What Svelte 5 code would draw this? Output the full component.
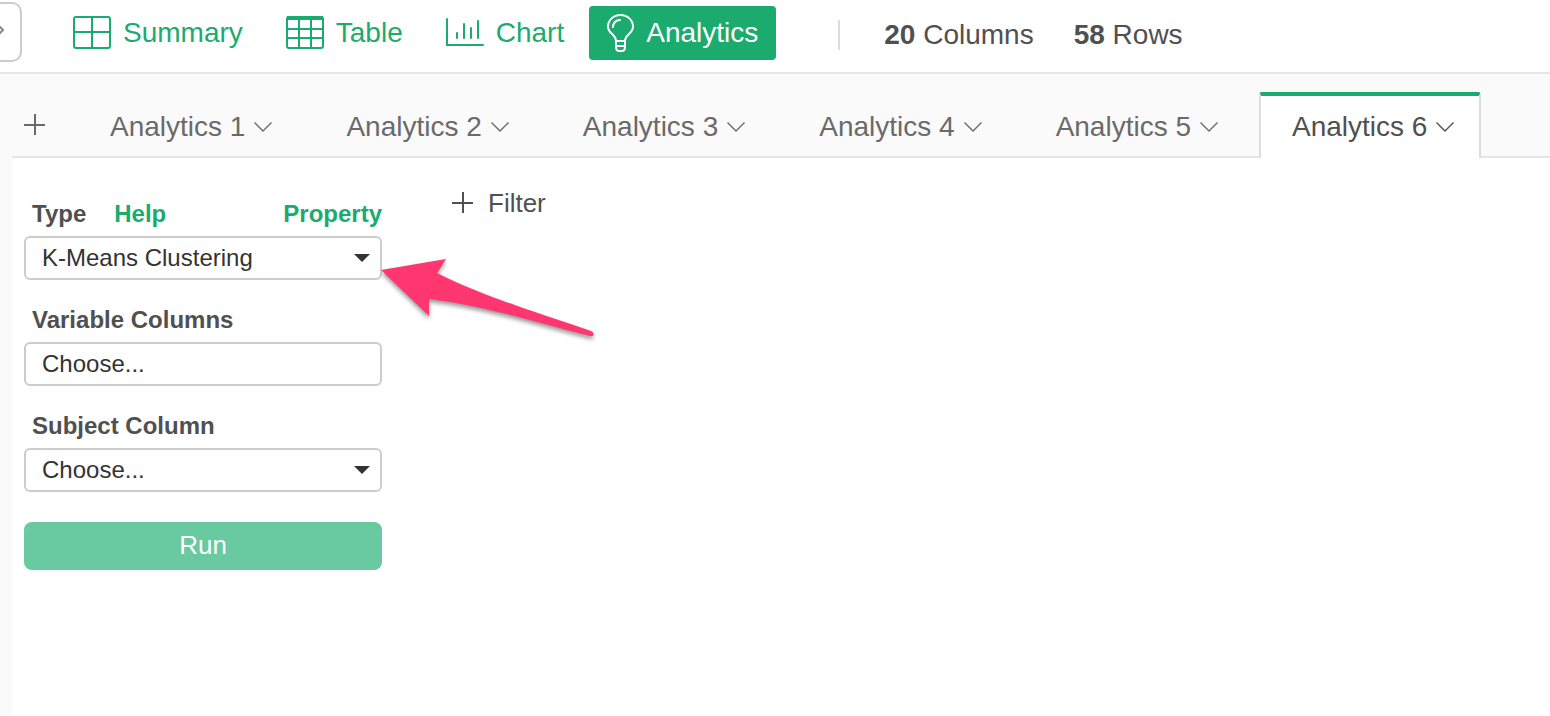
<script lang="ts">
	type View = 'Summary' | 'Table' | 'Chart' | 'Analytics';

	const views: View[] = ['Summary', 'Table', 'Chart', 'Analytics'];
	const tabs = [1, 2, 3, 4, 5, 6].map((n) => `Analytics ${n}`);

	let activeView = $state<View>('Analytics');
	let activeTab = $state('Analytics 6');
	let type = $state('K-Means Clustering');
	let variables = $state('');
	let subject = $state('');
</script>

{#snippet caret()}
	<svg class="caret" width="16" height="8" viewBox="0 0 16 8" aria-hidden="true">
		<path d="M0 0h16L8 8z" fill="#333" />
	</svg>
{/snippet}

{#snippet plus()}
	<svg width="22" height="22" viewBox="0 0 22 22" stroke="currentColor" stroke-width="2" aria-hidden="true">
		<path d="M11 0v21M0 11h21" />
	</svg>
{/snippet}

<div class="page">
	<header>
		<button type="button" class="expand" aria-label="Expand sidebar">
			<svg width="8" height="14" viewBox="0 0 8 14" fill="none" stroke="#888" stroke-width="2" aria-hidden="true">
				<path d="M1 1l6 6-6 6" />
			</svg>
		</button>

		<nav aria-label="Views">
			{#each views as view (view)}
				<button
					type="button"
					class="view"
					class:active={activeView === view}
					aria-pressed={activeView === view}
					onclick={() => (activeView = view)}
				>
					{#if view === 'Summary'}
						<svg width="38" height="34" viewBox="0 0 38 34" fill="none" stroke="currentColor" stroke-width="2" aria-hidden="true">
							<rect x="1" y="1" width="36" height="31" rx="2" />
							<path d="M19 1v31M1 16h36" />
						</svg>
					{:else if view === 'Table'}
						<svg width="38" height="34" viewBox="0 0 38 34" fill="none" stroke="currentColor" stroke-width="2" aria-hidden="true">
							<rect x="1" y="1" width="36" height="31" rx="2" />
							<path d="M13 4v28M25 4v28M1 13h36M1 22h36" />
							<path d="M1 2h36" stroke-width="4" stroke-linejoin="round" />
						</svg>
					{:else if view === 'Chart'}
						<svg width="38" height="34" viewBox="0 0 38 34" fill="none" stroke="currentColor" stroke-width="2" stroke-linecap="round" aria-hidden="true">
							<path d="M1 3v26h36M11 17v5M18 8v14M25 12v10M32 5v17" />
						</svg>
					{:else}
						<svg width="27" height="38" viewBox="0 0 27 38" fill="none" stroke="currentColor" stroke-width="2" stroke-linecap="round" stroke-linejoin="round" aria-hidden="true">
							<path d="M9 27C9 20 1 20 1 12.500a12.500 11.500 0 0 1 25 0C26 20 18 20 18 27z" />
							<path d="M6 13c0-4 3-7 7-7M9 27v6q0 4 3 4h3q3 0 3-4v-6M9 32h9" />
						</svg>
					{/if}
					{view}
				</button>
			{/each}
		</nav>

		<div class="counts">
			<span><b>20</b> Columns</span>
			<span><b>58</b> Rows</span>
		</div>
	</header>

	<div class="tab-bar">
		<button type="button" class="add" aria-label="Add analytics">{@render plus()}</button>
		<div class="tabs" role="tablist">
			{#each tabs as tab (tab)}
				<button
					type="button"
					role="tab"
					class="tab"
					aria-selected={activeTab === tab}
					onclick={() => (activeTab = tab)}
				>
					{tab}
					<svg width="18" height="10" viewBox="0 0 18 10" fill="none" stroke="currentColor" stroke-width="1.400" aria-hidden="true">
						<path d="M0.500 0.500L9 9l8.500-8.500" />
					</svg>
				</button>
			{/each}
		</div>
	</div>

	<main>
		<form onsubmit={(event) => event.preventDefault()}>
			<div class="field">
				<div class="label-row">
					<label for="type">Type</label>
					<a href="#help">Help</a>
					<button type="button" class="property">Property</button>
				</div>
				<div class="control">
					<select id="type" bind:value={type}>
						<option>K-Means Clustering</option>
					</select>
					{@render caret()}
					<svg class="pointer" width="224" height="96" viewBox="0 0 224 96" aria-hidden="true">
						<path
							d="M1 19L66 8L57 22C98 43 160 63 211 80C215 82 214 86 210 85C160 72 100 54 49 48V65Z"
							fill="#ff366f"
						/>
					</svg>
				</div>
			</div>

			<div class="field">
				<div class="label-row"><label for="variables">Variable Columns</label></div>
				<input id="variables" type="text" placeholder="Choose..." bind:value={variables} />
			</div>

			<div class="field">
				<div class="label-row"><label for="subject">Subject Column</label></div>
				<div class="control">
					<select id="subject" bind:value={subject}>
						<option value="">Choose...</option>
					</select>
					{@render caret()}
				</div>
			</div>

			<button type="submit" class="run">Run</button>
		</form>

		<button type="button" class="filter">{@render plus()} Filter</button>
	</main>
</div>

<style>
	:global(body) {
		margin: 0;
	}

	.page {
		--green: #1bab6e;
		display: flex;
		flex-direction: column;
		min-height: 100vh;
		background: #fafafa;
		color: #505050;
		font-family: 'Liberation Sans', Arial, sans-serif;
		font-size: 28px;
	}

	.page * {
		box-sizing: border-box;
	}

	svg {
		flex: none;
	}

	button {
		padding: 0;
		border: 0;
		background: none;
		color: inherit;
		font: inherit;
		cursor: pointer;
	}

	header {
		display: flex;
		align-items: flex-start;
		border-bottom: 2px solid #e6e6e6;
		padding: 2px 0 10px;
		background: #fff;
		white-space: nowrap;
	}

	.expand {
		display: flex;
		align-items: center;
		justify-content: center;
		width: 48px;
		height: 60px;
		margin-left: -26px;
		border: 2px solid #ccc;
		border-radius: 10px;
		padding: 0 0 4px 4px;
		background: #fff;
	}

	nav {
		display: flex;
		gap: 7px;
		margin: 4px 0 0 33px;
	}

	.view {
		display: flex;
		align-items: center;
		gap: 12px;
		height: 54px;
		padding: 0 18px;
		border-radius: 4px;
		color: var(--green);
	}

	.view.active {
		background: var(--green);
		color: #fff;
	}

	.counts {
		display: flex;
		gap: 40px;
		margin: 18px 0 0 62px;
		border-left: 2px solid #ddd;
		padding-left: 44px;
		line-height: 30px;
	}

	.tab-bar {
		display: flex;
		align-items: flex-end;
		gap: 31px;
		margin-left: 12px;
		padding: 18px 0 0 12px;
		box-shadow: inset 0 -2px #e6e6e6;
		color: #6a6a6a;
		white-space: nowrap;
	}

	.add {
		display: flex;
		align-items: center;
		height: 66px;
	}

	.tabs {
		display: flex;
		gap: 14px;
	}

	.tab {
		display: flex;
		align-items: center;
		gap: 9px;
		height: 66px;
		border: solid transparent;
		border-width: 4px 2px 0;
		padding: 0 25px 0 31px;
	}

	.tab[aria-selected='true'] {
		border-color: var(--green) #ddd transparent;
		border-radius: 3px 3px 0 0;
		background: #fff;
		color: #505050;
	}

	main {
		display: flex;
		flex: 1;
		align-items: flex-start;
		gap: 70px;
		margin-left: 12px;
		padding: 30px 12px;
		background: #fff;
	}

	form {
		display: flex;
		flex-direction: column;
		gap: 26px;
		width: 358px;
		padding-top: 12px;
		font-size: 24px;
	}

	.field {
		display: flex;
		flex-direction: column;
		gap: 8px;
	}

	.label-row {
		display: flex;
		gap: 28px;
		padding-left: 8px;
		font-weight: 700;
		line-height: 28px;
	}

	a,
	.property {
		color: var(--green);
		text-decoration: none;
	}

	.property {
		margin-left: auto;
	}

	.control {
		position: relative;
	}

	select,
	input {
		display: block;
		width: 100%;
		height: 44px;
		border: 2px solid #ccc;
		border-radius: 6px;
		padding: 0 16px;
		appearance: none;
		background: #fff;
		color: #333;
		font: inherit;
	}

	select {
		padding-bottom: 2px;
	}

	input::placeholder {
		color: #333;
		opacity: 1;
	}

	.caret {
		position: absolute;
		top: 18px;
		right: 12px;
		pointer-events: none;
	}

	.pointer {
		position: absolute;
		top: 15px;
		left: calc(100% - 2px);
		filter: drop-shadow(0 3px 2px rgb(0 0 0 / 40%));
		pointer-events: none;
	}

	.run {
		height: 48px;
		margin-top: 4px;
		border-radius: 8px;
		padding-bottom: 2px;
		background: #69c9a0;
		color: #fff;
		font-size: 26px;
	}

	.filter {
		display: flex;
		align-items: center;
		gap: 14px;
		font-size: 26px;
		line-height: 30px;
	}
</style>
